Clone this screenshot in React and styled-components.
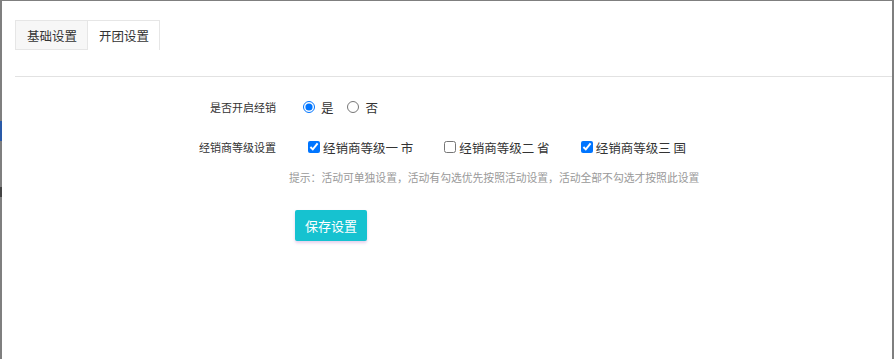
import React from "react";
import styled, { createGlobalStyle } from "styled-components";

const Global = createGlobalStyle`
  html, body { margin: 0; padding: 0; height: 100%; }
  body {
    background: #7f7f7f;
    font-family: "Noto Sans CJK SC", "Liberation Sans", sans-serif;
    color: #333;
    overflow: hidden;
  }
  #root { height: 100%; }
`;

const Stage = styled.div`
  position: relative;
  height: 100%;
  padding: 1px 2px 0 2px;
  box-sizing: border-box;
`;

const Mark = styled.span`
  position: absolute;
  left: 0;
  width: 2px;
  background: ${(p) => p.$color};
  top: ${(p) => p.$top}px;
  height: ${(p) => p.$h}px;
`;

const Panel = styled.div`
  background: #fff;
  height: 100%;
  padding: 19px 0 0 13px;
  box-sizing: border-box;
`;

const TabBar = styled.div`
  display: flex;
  height: 30px;
`;

const Tab = styled.div`
  display: flex;
  align-items: center;
  padding: 0 10px 0 11px;
  font-size: 12.5px;
  color: #333;
  box-sizing: border-box;
  border: 1px solid #e6e6e6;
  border-bottom: ${(p) => (p.$active ? "none" : "1px solid #e6e6e6")};
  border-left: ${(p) => (p.$first ? "1px solid #e6e6e6" : "none")};
  background: ${(p) => (p.$active ? "#fff" : "#f7f7f7")};
`;

const Content = styled.div`
  margin-top: 26px;
  border-top: 1px solid #e2e2e2;
  padding-top: 19px;
`;

const Row = styled.div`
  display: grid;
  grid-template-columns: 261px 1fr;
  column-gap: 13px;
  align-items: ${(p) => (p.$top ? "start" : "center")};
  height: ${(p) => p.$h}px;
`;

const Label = styled.div`
  text-align: right;
  font-size: 11px;
  color: #333;
`;

const Controls = styled.div`
  display: flex;
  align-items: center;
  padding-left: ${(p) => p.$pad}px;
  font-size: 12.5px;
  color: #333;
`;

const Option = styled.label`
  display: inline-flex;
  align-items: center;
  gap: ${(p) => p.$gap}px;
  margin-right: ${(p) => p.$mr}px;
  white-space: pre;
`;

const Radio = styled.input.attrs({ type: "radio" })`
  margin: 0;
  width: 12px;
  height: 12px;
`;

const Check = styled.input.attrs({ type: "checkbox" })`
  margin: 0;
  width: 12px;
  height: 12px;
`;

const Hint = styled.div`
  font-size: 10.8px;
  color: #999;
  white-space: nowrap;
`;

const Button = styled.button`
  margin: 14px 0 0 6px;
  height: 31px;
  padding: 0 10px;
  border: none;
  border-radius: 2px;
  background: #16c2d0;
  color: #fff;
  font-family: inherit;
  font-size: 13px;
  box-shadow: 0 2px 3px rgba(180, 120, 200, 0.35);
  cursor: pointer;
`;

export default function App() {
  return (
    <>
      <Global />
      <Stage>
        <Mark $color="#2a5aa8" $top={121} $h={20} />
        <Mark $color="#444" $top={187} $h={10} />
        <Panel>
          <TabBar>
            <Tab $first>基础设置</Tab>
            <Tab $active>开团设置</Tab>
          </TabBar>
          <Content>
            <Row $h={22}>
              <Label>是否开启经销</Label>
              <Controls $pad={14}>
                <Option $gap={6} $mr={13}>
                  <Radio name="jx" defaultChecked />是
                </Option>
                <Option $gap={7} $mr={0}>
                  <Radio name="jx" />否
                </Option>
              </Controls>
            </Row>
            <Row $h={18} />
            <Row $h={22}>
              <Label>经销商等级设置</Label>
              <Controls $pad={19}>
                <Option $gap={3} $mr={31}>
                  <Check defaultChecked />经销商等级一 市
                </Option>
                <Option $gap={3} $mr={31}>
                  <Check />经销商等级二 省
                </Option>
                <Option $gap={3} $mr={0}>
                  <Check defaultChecked />经销商等级三 国
                </Option>
              </Controls>
            </Row>
            <Row $h={38}>
              <div />
              <Hint>提示：活动可单独设置，活动有勾选优先按照活动设置，活动全部不勾选才按照此设置</Hint>
            </Row>
            <Row $h={60} $top>
              <div />
              <div>
                <Button>保存设置</Button>
              </div>
            </Row>
          </Content>
        </Panel>
      </Stage>
    </>
  );
}
